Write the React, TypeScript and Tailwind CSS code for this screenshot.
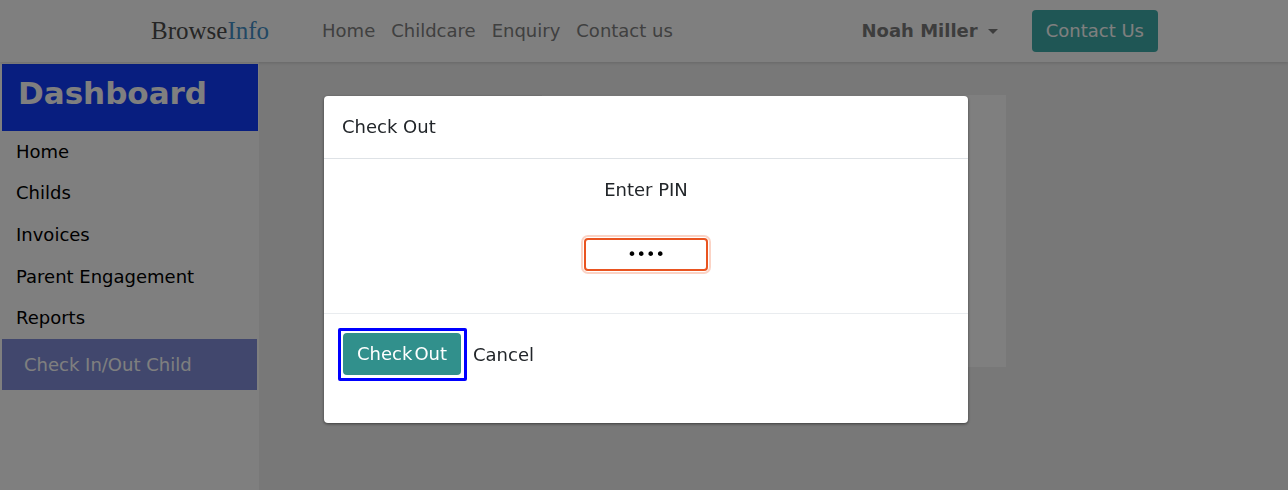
import { useState } from "react";

const navLinks = ["Home", "Childcare", "Enquiry", "Contact us"];
const menuLinks = ["Home", "Childs", "Invoices", "Parent Engagement", "Reports"];

function Header() {
  return (
    <header className="relative flex h-[62px] items-center bg-white pr-[130px] pl-[151px] shadow-[0_1px_3px_rgba(0,0,0,0.15)]">
      <a href="#" className="font-['Liberation_Serif',serif] text-[25px] leading-8 text-[#4c4c4c]">
        Browse<span className="text-[#4490c8]">Info</span>
      </a>
      <nav className="ml-[53px] flex gap-4 text-[#808080]">
        {navLinks.map((label) => (
          <a key={label} href="#">
            {label}
          </a>
        ))}
      </nav>
      <div className="ml-auto flex items-center">
        <button type="button" className="flex items-center gap-2.5 font-bold text-[#7a7a7a]">
          Noah Miller
          <svg viewBox="0 0 10 5" className="h-[5px] w-2.5" fill="currentColor" aria-hidden="true">
            <path d="M0 0h10L5 5z" />
          </svg>
        </button>
        <a href="#" className="ml-[34px] rounded bg-[#3fadaa] px-3.5 py-2 text-white">
          Contact Us
        </a>
      </div>
    </header>
  );
}

function Sidebar() {
  return (
    <aside className="w-[259px] shrink-0 bg-white pt-0.5 pl-0.5">
      <h1 className="mr-px h-[67px] bg-[#103dfe] px-4 pt-2.5 text-[31px] leading-[38px] font-bold text-white">
        Dashboard
      </h1>
      <nav className="mr-0.5">
        <div className="grid h-52 grid-rows-5 items-center">
          {menuLinks.map((label) => (
            <a key={label} href="#" className="px-3.5 text-black">
              {label}
            </a>
          ))}
        </div>
        <a href="#" className="flex h-[51px] items-center bg-[#828fda] px-[22px] text-white">
          Check In/Out Child
        </a>
      </nav>
    </aside>
  );
}

function CheckOutDialog() {
  const [pin, setPin] = useState("1234");
  return (
    <div className="fixed inset-0 flex items-start justify-center bg-black/50 pt-24 pl-1">
      <div
        role="dialog"
        aria-modal="true"
        aria-labelledby="dialog-title"
        className="w-full max-w-[644px] rounded bg-white pb-[42px] text-[#212529] shadow-[0_1px_3px_rgba(0,0,0,0.5)]"
      >
        <h2 id="dialog-title" className="border-b border-[#dee2e6] px-[18px] py-[18px]">
          Check Out
        </h2>
        <form>
          <div className="flex flex-col items-center border-b border-[#e9ecef] pt-[18px] pb-[42px]">
            <label htmlFor="pin">Enter PIN</label>
            <input
              id="pin"
              type="password"
              value={pin}
              onChange={(event) => setPin(event.target.value)}
              className="mt-[35px] h-[33px] w-[124px] rounded border-2 border-[#e95420] text-center text-[16px] text-black ring-2 ring-[#fbd3c5] ring-offset-1 outline-none"
            />
          </div>
          <div className="flex items-center gap-1.5 pt-3.5 pl-3.5">
            <div className="rounded-xs border-[3px] border-[#0000ff] pt-0.5 pr-[3px] pb-[3px] pl-0.5">
              <button type="submit" className="flex gap-0.5 rounded bg-[#31908c] px-3.5 py-2 text-white">
                <span>Check</span> <span>Out</span>
              </button>
            </div>
            <button type="button">Cancel</button>
          </div>
        </form>
      </div>
    </div>
  );
}

export default function App() {
  return (
    <div className="flex min-h-screen flex-col bg-[#f0f0f0] font-['DejaVu_Sans',sans-serif] text-[18px] leading-[26px]">
      <Header />
      <div className="flex flex-1">
        <Sidebar />
        <main className="flex flex-1 justify-center pt-[33px]">
          <section className="h-[272px] w-full max-w-[464px] bg-white" />
        </main>
      </div>
      <CheckOutDialog />
    </div>
  );
}
